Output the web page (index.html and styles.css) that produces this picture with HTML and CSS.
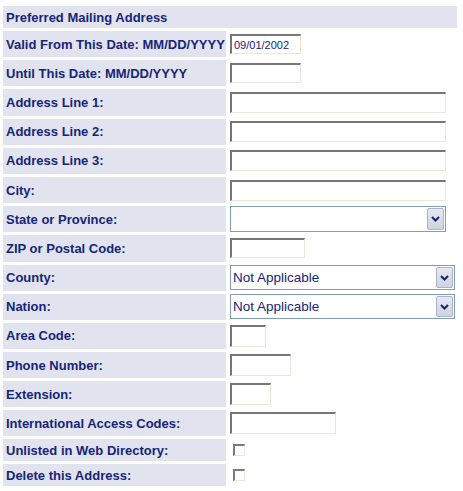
FILE: index.html
```html
<!DOCTYPE html>
<html>
<head>
<meta charset="utf-8">
<link rel="stylesheet" href="styles.css">
</head>
<body>
<div class="form">
  <div class="hdr">Preferred Mailing Address</div>

  <div class="label">Valid From This Date: MM/DD/YYYY</div>
  <div class="field"><input class="txt w-date" type="text" value="09/01/2002"></div>

  <div class="label">Until This Date: MM/DD/YYYY</div>
  <div class="field"><input class="txt w-date" type="text"></div>

  <div class="label">Address Line 1:</div>
  <div class="field"><input class="txt w-addr" type="text"></div>

  <div class="label">Address Line 2:</div>
  <div class="field"><input class="txt w-addr" type="text"></div>

  <div class="label">Address Line 3:</div>
  <div class="field"><input class="txt w-addr" type="text"></div>

  <div class="label">City:</div>
  <div class="field"><input class="txt w-addr" type="text"></div>

  <div class="label">State or Province:</div>
  <div class="field">
    <div class="select w-state tall">
      <span class="select-value"></span>
      <span class="select-btn"><svg width="9" height="6" viewBox="0 0 9 6"><path d="M1 1 L4.5 4.5 L8 1" fill="none" stroke="#1b2560" stroke-width="2"/></svg></span>
    </div>
  </div>

  <div class="label">ZIP or Postal Code:</div>
  <div class="field"><input class="txt w-zip" type="text"></div>

  <div class="label">County:</div>
  <div class="field">
    <div class="select w-wide">
      <span class="select-value">Not Applicable</span>
      <span class="select-btn"><svg width="9" height="6" viewBox="0 0 9 6"><path d="M1 1 L4.5 4.5 L8 1" fill="none" stroke="#1b2560" stroke-width="2"/></svg></span>
    </div>
  </div>

  <div class="label">Nation:</div>
  <div class="field">
    <div class="select w-wide">
      <span class="select-value">Not Applicable</span>
      <span class="select-btn"><svg width="9" height="6" viewBox="0 0 9 6"><path d="M1 1 L4.5 4.5 L8 1" fill="none" stroke="#1b2560" stroke-width="2"/></svg></span>
    </div>
  </div>

  <div class="label">Area Code:</div>
  <div class="field"><input class="txt tall w-area" type="text"></div>

  <div class="label">Phone Number:</div>
  <div class="field"><input class="txt tall w-phone" type="text"></div>

  <div class="label">Extension:</div>
  <div class="field"><input class="txt tall w-ext" type="text"></div>

  <div class="label">International Access Codes:</div>
  <div class="field"><input class="txt tall w-intl" type="text"></div>

  <div class="label short">Unlisted in Web Directory:</div>
  <div class="field short"><input class="chk" type="checkbox"></div>

  <div class="label short">Delete this Address:</div>
  <div class="field short"><input class="chk" type="checkbox"></div>
</div>
</body>
</html>
```

FILE: styles.css
```css
html, body {
  margin: 0;
  padding: 0;
  background: #ffffff;
}

body {
  padding: 6px 0 0 3px;
  font-family: "Liberation Sans", Arial, sans-serif;
}

.form {
  display: grid;
  grid-template-columns: 223px 229px;
  grid-template-rows: 22px repeat(13, 26.2px) 26px 22px 22px;
  column-gap: 2px;
  row-gap: 3px;
  width: 454px;
}

.hdr {
  grid-column: 1 / span 2;
  background: #e1e4ee;
  color: #17247a;
  font-weight: bold;
  font-size: 13px;
  display: flex;
  align-items: center;
  padding-left: 3px;
}

.label {
  background: #e1e4ee;
  color: #17247a;
  font-weight: bold;
  font-size: 13px;
  display: flex;
  align-items: center;
  padding-left: 3px;
  white-space: nowrap;
}

.field {
  display: flex;
  align-items: center;
  padding-left: 2px;
}

.txt {
  box-sizing: border-box;
  height: 20px;
  margin: 0;
  padding: 0 2px;
  background: #ffffff;
  border-style: solid;
  border-width: 2px 1px 1px 2px;
  border-color: #767676 #e9e8da #e9e8da #767676;
  font-family: "Liberation Sans", Arial, sans-serif;
  font-size: 11px;
  color: #17247a;
  outline: none;
}

.txt.tall { height: 22px; }

.w-date { width: 71px; }
.w-addr { width: 216px; height: 21px; }
.w-zip { width: 75px; }
.w-area { width: 36px; }
.w-phone { width: 61px; }
.w-ext { width: 41px; }
.w-intl { width: 106px; }

.select {
  box-sizing: border-box;
  display: flex;
  align-items: stretch;
  height: 25px;
  border: 1px solid #7f9db9;
  background: #ffffff;
}

.select.tall { height: 26px; }
.w-state { width: 216px; }
.w-wide { width: 225px; }

.select-value {
  flex: 1;
  display: flex;
  align-items: center;
  padding-left: 2px;
  font-size: 13.5px;
  color: #17247a;
  white-space: nowrap;
}

.select-btn {
  box-sizing: border-box;
  width: 17px;
  margin: 1px;
  display: flex;
  align-items: center;
  justify-content: center;
  background: linear-gradient(#e6e9f2, #cdd3e2);
  border: 1px solid #aab4cc;
  border-radius: 2px;
}

.chk {
  -webkit-appearance: none;
  appearance: none;
  box-sizing: border-box;
  width: 12px;
  height: 12px;
  margin: 0 0 0 3px;
  background: #ffffff;
  border-style: solid;
  border-width: 2px 1px 1px 2px;
  border-color: #7a7a7a #e9e8da #e9e8da #7a7a7a;
}
```
